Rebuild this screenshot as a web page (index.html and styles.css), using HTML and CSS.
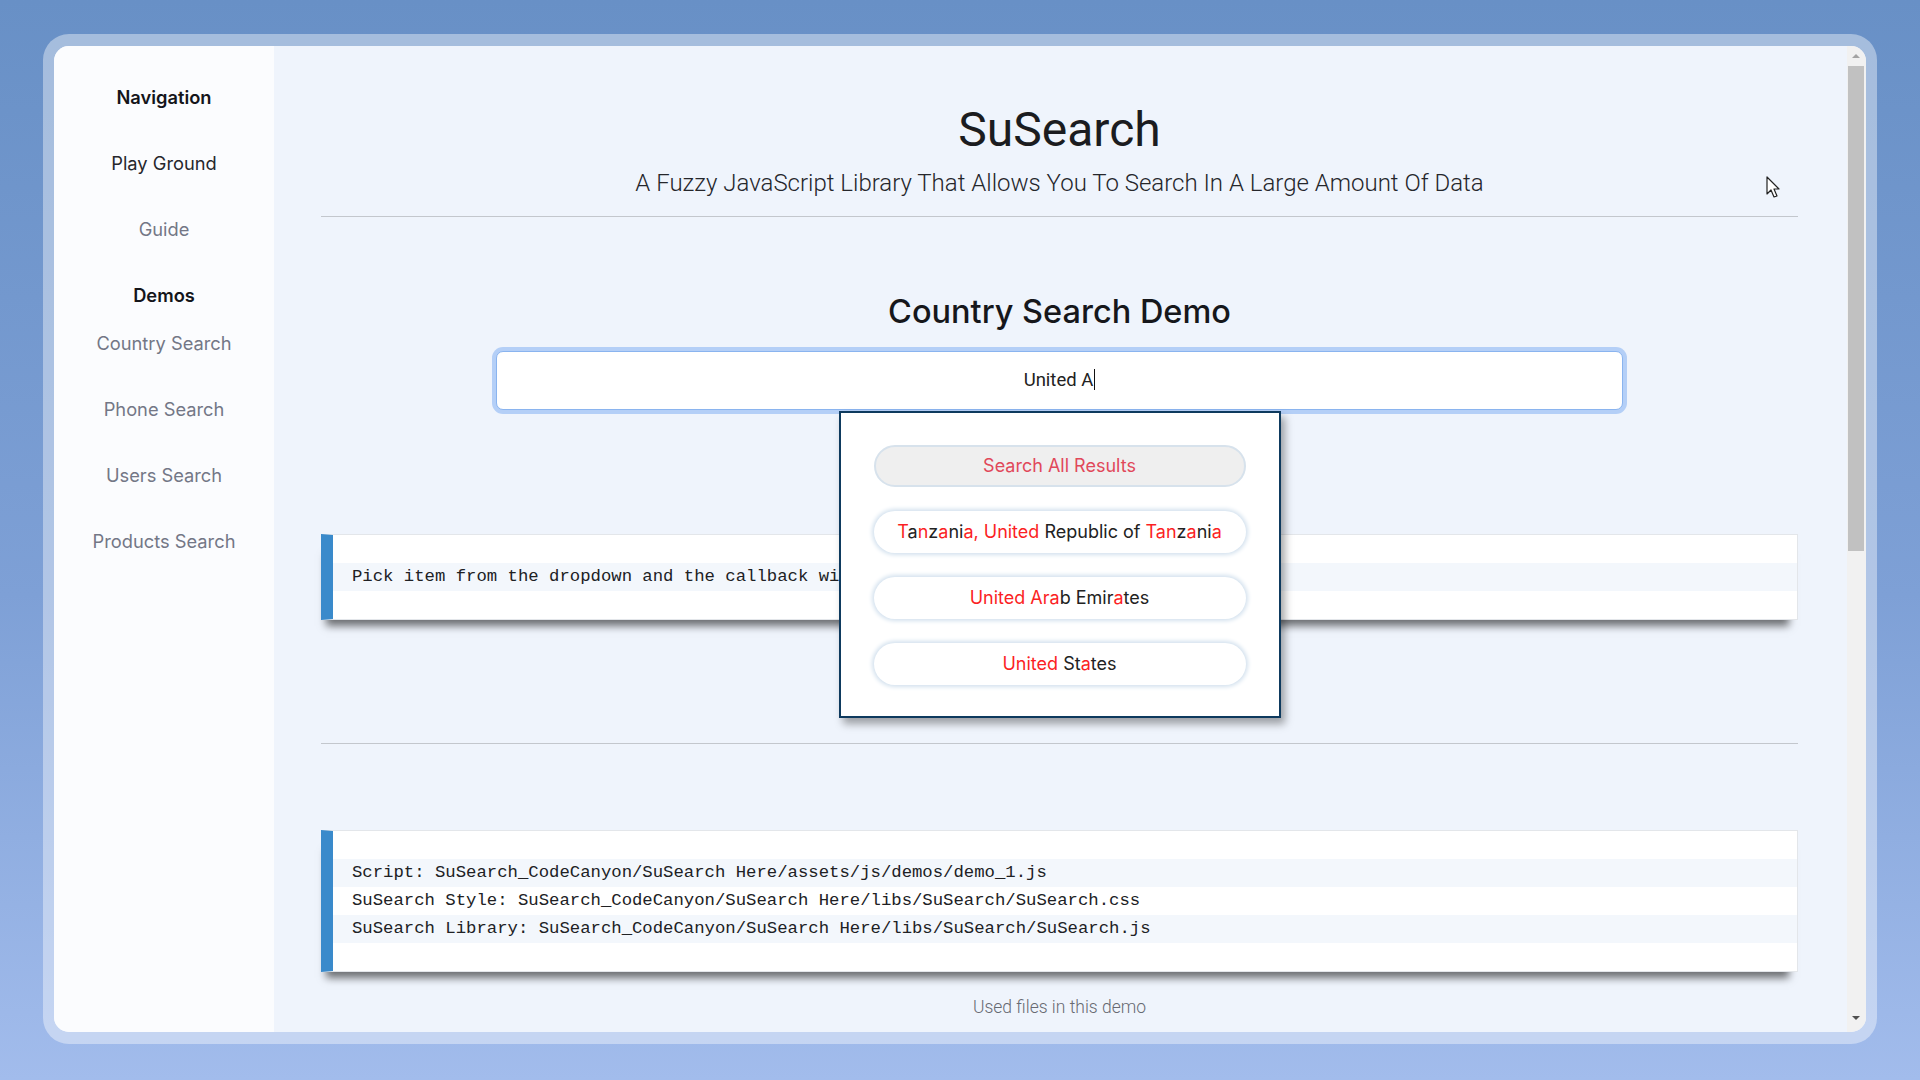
FILE: index.html
```html
<!DOCTYPE html>
<html lang="en">
<head>
<meta charset="utf-8">
<title>SuSearch</title>
<link rel="stylesheet" href="styles.css">
</head>
<body>
<div class="frame">
  <div class="window">
    <aside class="sidebar">
      <div class="nav-head">Navigation</div>
      <a class="nav-item active">Play Ground</a>
      <a class="nav-item">Guide</a>
      <div class="nav-head demos">Demos</div>
      <a class="nav-item">Country Search</a>
      <a class="nav-item">Phone Search</a>
      <a class="nav-item">Users Search</a>
      <a class="nav-item">Products Search</a>
    </aside>
    <main class="main">
      <h1 class="title">SuSearch</h1>
      <p class="subtitle">A Fuzzy JavaScript Library That Allows You To Search In A Large Amount Of Data</p>
      <hr class="rule">
      <h2 class="demo-title">Country Search Demo</h2>
      <div class="search-wrap">
        <div class="search-input">United A<span class="caret"></span></div>
        <div class="dropdown">
          <div class="pill pill-all">Search All Results</div>
          <div class="pill"><span class="hl">T</span>a<span class="hl">n</span>z<span class="hl">a</span>ni<span class="hl">a, United</span> Republic of <span class="hl">T</span><span class="hl">an</span>z<span class="hl">a</span>ni<span class="hl">a</span></div>
          <div class="pill"><span class="hl">United Ara</span>b Emir<span class="hl">a</span>tes</div>
          <div class="pill"><span class="hl">United</span> St<span class="hl">a</span>tes</div>
        </div>
      </div>
      <pre class="code code-callback">Pick item from the dropdown and the callback will show the result here</pre>
      <hr class="rule rule-2">
      <pre class="code code-files">Script: SuSearch_CodeCanyon/SuSearch Here/assets/js/demos/demo_1.js
SuSearch Style: SuSearch_CodeCanyon/SuSearch Here/libs/SuSearch/SuSearch.css
SuSearch Library: SuSearch_CodeCanyon/SuSearch Here/libs/SuSearch/SuSearch.js</pre>
      <p class="caption">Used files in this demo</p>
    </main>
    <div class="scrollbar">
      <div class="sb-btn sb-up"><span class="tri-up"></span></div>
      <div class="sb-thumb"></div>
      <div class="sb-track"></div>
      <div class="sb-btn sb-down"><span class="tri-down"></span></div>
    </div>
  </div>
</div>
<svg class="cursor" width="16" height="24" viewBox="0 0 16 24"><path d="M1 1 L1 18 L5 14 L8 21 L11 20 L8 13 L13 13 Z" fill="#fff" stroke="#222" stroke-width="1.2" stroke-linejoin="round"/></svg>
</body>
</html>
```
FILE: styles.css
```css
* { box-sizing: border-box; }
html, body { margin: 0; height: 100%; }
body {
  width: 1920px;
  height: 1080px;
  overflow: hidden;
  background: linear-gradient(180deg, #6890c6 0%, #7ea0d6 55%, #a2bcec 100%);
  padding: 34px 0 0 43px;
  font-family: "Inter", "Liberation Sans", sans-serif;
  position: relative;
}
.frame {
  width: 1834px;
  height: 1010px;
  padding: 12px 11px 12px 11px;
  border-radius: 26px;
  background: rgba(255, 255, 255, 0.4);
}
.window {
  width: 100%;
  height: 100%;
  border-radius: 15px;
  overflow: hidden;
  display: flex;
  background: #eff4fc;
}
.sidebar {
  width: 220px;
  flex: none;
  background: #fbfcfe;
  display: flex;
  flex-direction: column;
  align-items: stretch;
  padding-top: 18px;
  text-align: center;
}
.nav-head {
  height: 66px;
  line-height: 66px;
  font-size: 18.3px;
  font-weight: 600;
  color: #14151a;
}
.nav-head.demos {
  height: 30px;
  line-height: 30px;
  margin-top: 18px;
}
.nav-item {
  display: block;
  height: 66px;
  line-height: 66px;
  font-size: 18.3px;
  color: #737786;
}
.nav-item.active { color: #26272c; }

.main {
  flex: 1;
  padding: 0 49px 0 47px;
  display: flex;
  flex-direction: column;
  font-family: "Roboto", "Liberation Sans", sans-serif;
}
.title {
  margin: 56px 0 0;
  font-size: 48px;
  line-height: 56px;
  font-weight: 400;
  color: #1b1c20;
  text-align: center;
}
.subtitle {
  margin: 10px 0 0;
  font-size: 24px;
  line-height: 30px;
  font-weight: 300;
  color: #25262b;
  text-align: center;
}
.rule {
  margin: 18px 0 0;
  border: 0;
  border-top: 1px solid #c3c7cd;
  height: 0;
}
.demo-title {
  margin: 75px 0 0;
  font-family: "Inter", "Liberation Sans", sans-serif;
  font-size: 32.5px;
  line-height: 40px;
  font-weight: 500;
  color: #16171b;
  text-align: center;
}
.search-wrap {
  position: relative;
  width: 1127px;
  margin: 19px auto 0;
  z-index: 2;
}
.search-input {
  height: 59px;
  background: #fff;
  border: 1px solid #8ab4ef;
  border-radius: 7px;
  box-shadow: 0 0 0 4px #b4cff7;
  font-size: 18.5px;
  line-height: 57px;
  text-align: center;
  color: #222;
}
.caret {
  display: inline-block;
  width: 1px;
  height: 21px;
  background: #111;
  vertical-align: -4px;
  margin-left: 1px;
}
.dropdown {
  position: absolute;
  top: calc(100% + 1px);
  left: 50%;
  transform: translateX(-50%);
  width: 442px;
  background: #fff;
  border: 2px solid #0e3a5e;
  padding: 32px 33px 31px;
  display: flex;
  flex-direction: column;
  gap: 24px;
  box-shadow: 4px 6px 8px rgba(0, 0, 0, 0.35);
  font-family: "Inter", "Liberation Sans", sans-serif;
}
.pill {
  height: 42px;
  border-radius: 21px;
  background: #fff;
  box-shadow: 0 0 4px 2px #d3e1ee;
  text-align: center;
  line-height: 42px;
  font-size: 18px;
  color: #222;
  white-space: nowrap;
}
.pill-all {
  background: #efefef;
  border: 2px solid #d7e2ec;
  box-shadow: none;
  line-height: 38px;
  color: #e1485a;
}
.hl { color: #fb1f24; }

.code {
  margin: 0;
  font-family: "Liberation Mono", "DejaVu Sans Mono", monospace;
  font-size: 17.3px;
  line-height: 28px;
  color: #202124;
  padding: 28px 0 28px 19px;
  border: 1px solid #e3e6ea;
  border-left: 12px solid #3a8acb;
  background: repeating-linear-gradient(180deg, #ffffff 0, #ffffff 28px, #f3f7fc 28px, #f3f7fc 56px);
  box-shadow: -2px 13px 8px -7px rgba(0, 0, 0, 0.55);
  white-space: pre;
  overflow: hidden;
}
.code-callback { margin-top: 124px; }
.rule-2 { margin-top: 123px; }
.code-files { margin-top: 86px; }
.caption {
  margin: 25px 0 0;
  font-size: 17.5px;
  line-height: 20px;
  font-weight: 300;
  color: #676a72;
  text-align: center;
}

.scrollbar {
  width: 19px;
  flex: none;
  background: #f1f1f1;
  display: flex;
  flex-direction: column;
  padding: 0 2px 0 1px;
}
.sb-btn {
  height: 20px;
  display: flex;
  align-items: center;
  justify-content: center;
}
.sb-down { height: 18px; align-items: flex-start; }
.sb-thumb {
  height: 485px;
  background: #c1c1c1;
}
.sb-track { flex: 1; }
.tri-up {
  width: 0; height: 0;
  border-left: 4px solid transparent;
  border-right: 4px solid transparent;
  border-bottom: 4px solid #a3a3a3;
}
.tri-down {
  width: 0; height: 0;
  border-left: 4px solid transparent;
  border-right: 4px solid transparent;
  border-top: 4px solid #505050;
  margin-top: 2px;
}
.cursor {
  position: absolute;
  left: 1766px;
  top: 176px;
}
```
